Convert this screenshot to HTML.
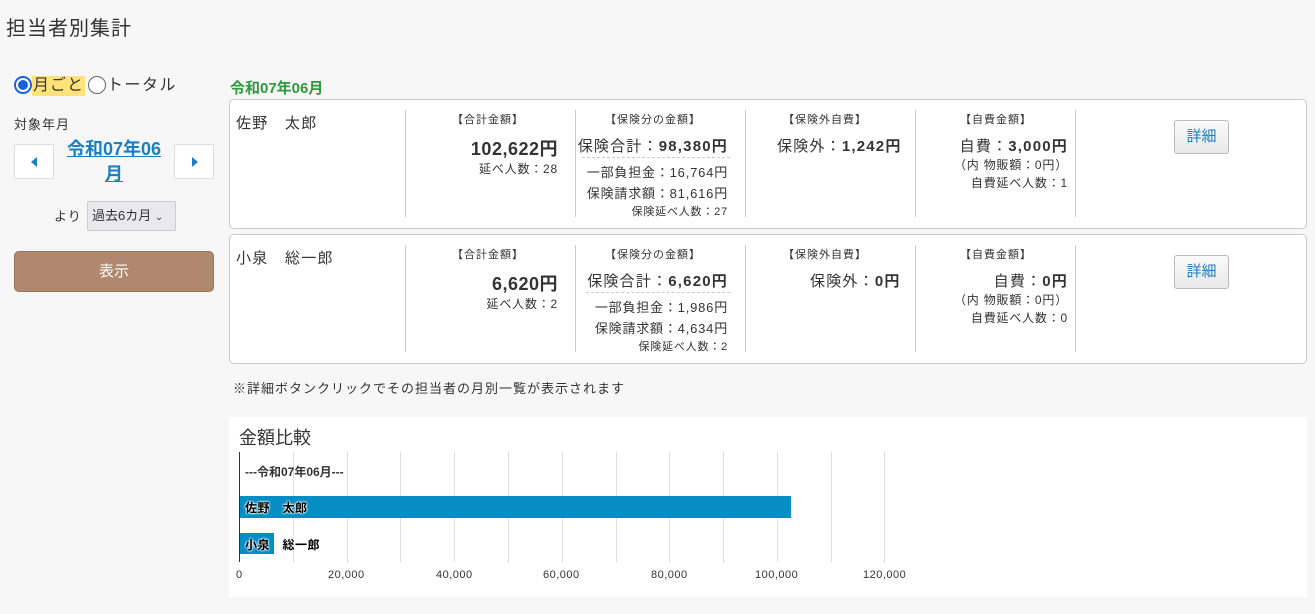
<!DOCTYPE html>
<html><head><meta charset="utf-8"><style>
*{margin:0;padding:0;box-sizing:border-box}
body{width:1315px;height:614px;background:#f7f7f7;font-family:"Liberation Sans","Noto Sans CJK JP",sans-serif;color:#333;position:relative;overflow:hidden}
.a{position:absolute;white-space:nowrap}
.card{position:absolute;left:229px;width:1078px;height:130px;background:#fff;border:1px solid #c8c8c8;border-radius:5px}
.dv{position:absolute;width:1px;background:#ccc;top:10px;height:107px}
.h{font-size:11px;color:#333;letter-spacing:1px}
.r{text-align:right}
.big{font-size:18px;font-weight:bold;letter-spacing:.5px}
.m{font-size:15px;letter-spacing:1.2px}
.s{font-size:12px;letter-spacing:.8px}
.btn{position:absolute;left:944px;top:20px;width:55px;height:34px;border:1px solid #bbb;border-radius:3px;background:linear-gradient(#fafafa,#e8e8e8);color:#1a7fc0;font-size:15px;text-align:center;line-height:32px}
.g{position:absolute;top:452px;height:110px;width:1px;background:#ddd}
.x{position:absolute;top:569px;font-size:11px;color:#333;letter-spacing:.5px}
</style></head><body>
<div class="a" style="left:6px;top:12px;font-size:20px;color:#333;letter-spacing:1px">担当者別集計</div>

<div class="a" style="left:14px;top:76px;width:18px;height:18px;border-radius:50%;border:2px solid #1a5fd6;background:#fff"><div style="position:absolute;left:2px;top:2px;width:10px;height:10px;border-radius:50%;background:#1a5fd6"></div></div>
<div class="a" style="left:32px;top:76px;background:#ffe27a;font-size:16px;line-height:20px;padding:0 1px;letter-spacing:1px">月ごと</div>
<div class="a" style="left:88px;top:76px;width:18px;height:18px;border-radius:50%;border:1px solid #666;background:#fff"></div>
<div class="a" style="left:107px;top:76px;font-size:16px;line-height:20px;letter-spacing:1.5px">トータル</div>

<div class="a" style="left:14px;top:114px;font-size:13px;letter-spacing:1px">対象年月</div>
<div class="a" style="left:14px;top:144px;width:40px;height:35px;border:1px solid #ddd;background:#fff;border-radius:2px"><div style="position:absolute;left:16px;top:12px;border-right:6px solid #1a7fc0;border-top:5px solid transparent;border-bottom:5px solid transparent"></div></div>
<div class="a" style="left:174px;top:144px;width:40px;height:35px;border:1px solid #ddd;background:#fff;border-radius:2px"><div style="position:absolute;left:17px;top:12px;border-left:6px solid #1a7fc0;border-top:5px solid transparent;border-bottom:5px solid transparent"></div></div>
<div class="a" style="left:58px;top:137px;width:112px;text-align:center;white-space:normal;font-size:18px;font-weight:bold;color:#1a7fc0;text-decoration:underline;line-height:25px">令和07年06月</div>

<div class="a" style="left:54px;top:206px;font-size:13px;letter-spacing:1px">より</div>
<div class="a" style="left:87px;top:201px;width:89px;height:30px;background:#e9e9ed;border:1px solid #ccc;border-radius:2px;font-size:13px;line-height:28px;padding-left:4px">過去6カ月 <span style="font-size:10px">⌄</span></div>

<div class="a" style="left:14px;top:251px;width:200px;height:41px;background:#b0886e;border:1px solid #9a735a;border-radius:5px;color:#fff;font-size:15px;text-align:center;line-height:39px">表示</div>

<div class="a" style="left:230px;top:77px;font-size:15px;font-weight:bold;color:#2e9a3e">令和07年06月</div>

<div class="card" style="top:99px">
 <div class="a" style="left:6px;top:12px;font-size:15px;letter-spacing:1.3px">佐野　太郎</div>
 <div class="dv" style="left:175px"></div><div class="dv" style="left:345px"></div><div class="dv" style="left:515px"></div><div class="dv" style="left:685px"></div><div class="dv" style="left:845px"></div>
 <div class="a h" style="left:222px;top:11px">【合計金額】</div>
 <div class="a big r" style="right:748px;top:35px">102,622円</div>
 <div class="a s r" style="right:748px;top:60px">延べ人数：28</div>
 <div class="a h" style="left:375px;top:11px">【保険分の金額】</div>
 <div class="a m r" style="right:578px;top:35px">保険合計：<b>98,380円</b></div>
 <div class="a" style="left:352px;top:57px;width:148px;border-top:1px dashed #ccc"></div>
 <div class="a s r" style="right:578px;top:62px;font-size:13px">一部負担金：16,764円</div>
 <div class="a s r" style="right:578px;top:83px;font-size:13px">保険請求額：81,616円</div>
 <div class="a s r" style="right:578px;top:103px;font-size:11px">保険延べ人数：27</div>
 <div class="a h" style="left:553px;top:11px">【保険外自費】</div>
 <div class="a m" style="left:547px;top:35px">保険外：<b>1,242円</b></div>
 <div class="a h" style="left:730px;top:11px">【自費金額】</div>
 <div class="a m r" style="right:238px;top:35px">自費：<b>3,000円</b></div>
 <div class="a s r" style="right:238px;top:56px;font-size:12px">（内 物販額：0円）</div>
 <div class="a s r" style="right:238px;top:74px;font-size:12px">自費延べ人数：1</div>
 <div class="btn">詳細</div>
</div>

<div class="card" style="top:234px">
 <div class="a" style="left:6px;top:12px;font-size:15px;letter-spacing:1.3px">小泉　総一郎</div>
 <div class="dv" style="left:175px"></div><div class="dv" style="left:345px"></div><div class="dv" style="left:515px"></div><div class="dv" style="left:685px"></div><div class="dv" style="left:845px"></div>
 <div class="a h" style="left:222px;top:11px">【合計金額】</div>
 <div class="a big r" style="right:748px;top:35px">6,620円</div>
 <div class="a s r" style="right:748px;top:60px">延べ人数：2</div>
 <div class="a h" style="left:375px;top:11px">【保険分の金額】</div>
 <div class="a m r" style="right:578px;top:35px">保険合計：<b>6,620円</b></div>
 <div class="a" style="left:356px;top:57px;width:144px;border-top:1px dashed #ccc"></div>
 <div class="a s r" style="right:578px;top:62px;font-size:13px">一部負担金：1,986円</div>
 <div class="a s r" style="right:578px;top:83px;font-size:13px">保険請求額：4,634円</div>
 <div class="a s r" style="right:578px;top:103px;font-size:11px">保険延べ人数：2</div>
 <div class="a h" style="left:553px;top:11px">【保険外自費】</div>
 <div class="a m" style="left:580px;top:35px">保険外：<b>0円</b></div>
 <div class="a h" style="left:730px;top:11px">【自費金額】</div>
 <div class="a m r" style="right:238px;top:35px">自費：<b>0円</b></div>
 <div class="a s r" style="right:238px;top:56px;font-size:12px">（内 物販額：0円）</div>
 <div class="a s r" style="right:238px;top:74px;font-size:12px">自費延べ人数：0</div>
 <div class="btn">詳細</div>
</div>

<div class="a" style="left:233px;top:378px;font-size:13px;letter-spacing:1px">※詳細ボタンクリックでその担当者の月別一覧が表示されます</div>

<div class="a" style="left:229px;top:417px;width:1078px;height:180px;background:#fff"></div>
<div class="a" style="left:239px;top:424px;font-size:18px">金額比較</div>
<div class="g" style="left:293px"></div><div class="g" style="left:347px"></div><div class="g" style="left:400px"></div><div class="g" style="left:454px"></div><div class="g" style="left:508px"></div><div class="g" style="left:562px"></div><div class="g" style="left:616px"></div><div class="g" style="left:669px"></div><div class="g" style="left:723px"></div><div class="g" style="left:777px"></div><div class="g" style="left:831px"></div><div class="g" style="left:884px"></div>
<div class="g" style="left:239px;background:#333"></div>
<div class="a" style="left:245px;top:463px;font-size:12px;font-weight:bold">---令和07年06月---</div>
<div class="a" style="left:240px;top:496px;width:551px;height:22px;background:#078dc6"></div>
<div class="a" style="left:245px;top:499px;font-size:12px;font-weight:bold;color:#000;letter-spacing:.5px;text-shadow:0 0 2px #fff,0 0 2px #fff,0 0 2px #fff">佐野　太郎</div>
<div class="a" style="left:240px;top:533px;width:34px;height:21px;background:#078dc6"></div>
<div class="a" style="left:245px;top:536px;font-size:12px;font-weight:bold;color:#000;letter-spacing:.5px;text-shadow:0 0 2px #fff,0 0 2px #fff,0 0 2px #fff">小泉　総一郎</div>
<div class="x" style="left:236px">0</div>
<div class="x" style="left:328px">20,000</div>
<div class="x" style="left:436px">40,000</div>
<div class="x" style="left:543px">60,000</div>
<div class="x" style="left:651px">80,000</div>
<div class="x" style="left:755px">100,000</div>
<div class="x" style="left:863px">120,000</div>
</body></html>
